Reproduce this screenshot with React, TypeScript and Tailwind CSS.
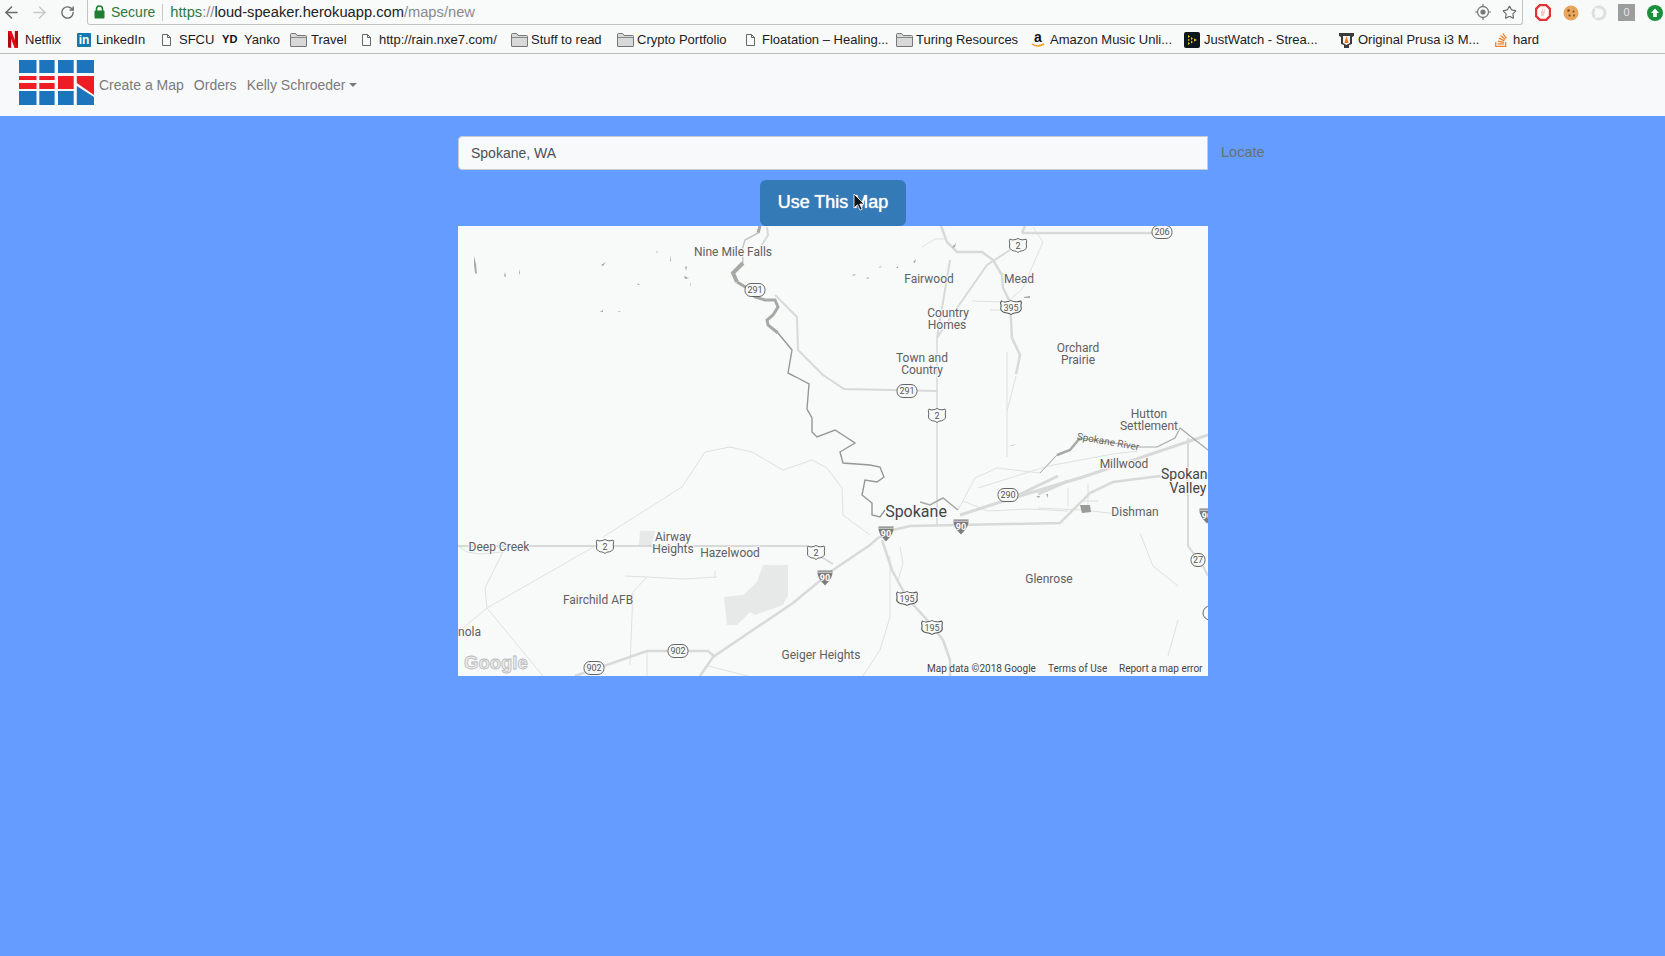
import { ArrowLeft, ArrowRight, RotateCw, Star } from "lucide-react";
import { FaStackOverflow } from "react-icons/fa";
import type { ReactNode } from "react";

const FolderIcon = () => (
  <svg width="17" height="14" viewBox="0 0 17 14" className="shrink-0">
    <path d="M.5 13V1.5A1 1 0 0 1 1.5.5h4.2l1.3 2h8.5a1 1 0 0 1 1 1V13a.5.5 0 0 1-.5.5H1a.5.5 0 0 1-.5-.5z" fill="#d8d8d8" stroke="#777" />
    <path d="M1 4.500h15" stroke="#888" />
  </svg>
);

const DocIcon = () => (
  <svg width="9" height="12" viewBox="0 0 9 12" className="shrink-0">
    <path d="M.5.5h5l3 3v8h-8z M5.500.5v3h3" fill="#fafafa" stroke="#666" />
  </svg>
);

const bookmarks: { label: string; width: string; gap: string; icon: ReactNode }[] = [
  {
    label: "Netflix",
    width: "w-[69px]",
    gap: "gap-[7px]",
    icon: (
      <svg width="10" height="17" viewBox="0 0 10 17" className="shrink-0">
        <path d="M0 0h3.200v17L0 16.600z M6.800 0H10v16.600L6.800 17z" fill="#b1060f" />
        <path d="M0 0h3.400l6.600 17H6.600z" fill="#e50914" />
      </svg>
    ),
  },
  {
    label: "LinkedIn",
    width: "w-[85px]",
    gap: "gap-[5px]",
    icon: (
      <span className="flex h-[14px] w-[14px] shrink-0 items-end justify-center rounded-[1px] bg-[#0f78b4] text-[12px] leading-[13px] font-bold text-white">
        in
      </span>
    ),
  },
  { label: "SFCU", width: "w-[60px]", gap: "gap-[8px]", icon: <DocIcon /> },
  {
    label: "Yanko",
    width: "w-[68px]",
    gap: "gap-[5px]",
    icon: <span className="w-[17px] shrink-0 text-[11px] leading-none font-bold tracking-[0.2px] text-[#111]">YD</span>,
  },
  { label: "Travel", width: "w-[72px]", gap: "gap-[4px]", icon: <FolderIcon /> },
  { label: "http://rain.nxe7.com/", width: "w-[149px]", gap: "gap-[8px]", icon: <DocIcon /> },
  { label: "Stuff to read", width: "w-[106px]", gap: "gap-[3px]", icon: <FolderIcon /> },
  { label: "Crypto Portfolio", width: "w-[129px]", gap: "gap-[3px]", icon: <FolderIcon /> },
  { label: "Floatation – Healing...", width: "w-[150px]", gap: "gap-[7px]", icon: <DocIcon /> },
  { label: "Turing Resources", width: "w-[135px]", gap: "gap-[3px]", icon: <FolderIcon /> },
  {
    label: "Amazon Music Unli...",
    width: "w-[153px]",
    gap: "gap-[5px]",
    icon: (
      <span className="flex h-[17px] w-[14px] shrink-0 flex-col items-center">
        <span className="h-[12px] text-[14px] leading-[12px] font-bold text-[#111]">a</span>
        <svg width="14" height="5" viewBox="0 0 14 5">
          <path d="M1 1c3 2.500 8 2.500 12 0" fill="none" stroke="#f59a23" strokeWidth="1.500" />
        </svg>
      </span>
    ),
  },
  {
    label: "JustWatch - Strea...",
    width: "w-[155px]",
    gap: "gap-[4px]",
    icon: (
      <svg width="16" height="16" viewBox="0 0 16 16" className="shrink-0">
        <rect width="16" height="16" rx="2" fill="#10161d" />
        <path d="M4 3l2 1.500-2 1.500z M4 7l2 1-2 1z M4 10l2 1.500-2 1.500z M7 5l2 1.500-2 1.500z M7 8.500l2 1.500-2 1.500z M10 6.500l3 1.500-3 1.500z" fill="#f5c518" />
      </svg>
    ),
  },
  {
    label: "Original Prusa i3 M...",
    width: "w-[155px]",
    gap: "gap-[4px]",
    icon: (
      <svg width="15" height="16" viewBox="0 0 15 16" className="shrink-0">
        <path d="M0 1h15v3l-2 1v7l-3 1v3H5v-3l-3-1V5L0 4z" fill="#3a3a3a" />
        <path d="M4 4h7v7l-3.500 2L4 11z" fill="#f2f2f2" />
        <path d="M7.500 4l2 7h-4z" fill="#e8751a" />
      </svg>
    ),
  },
  {
    label: "hard",
    width: "w-[60px]",
    gap: "gap-[5px]",
    icon: <FaStackOverflow className="h-[16px] w-[14px] shrink-0 text-[#f48024]" />,
  },
];

function BrowserChrome() {
  return (
    <div className="flex h-[54px] flex-col border-b border-[#bdbdbd] bg-[#f8f9f9] font-['Liberation_Sans',sans-serif]">
      <div className="flex h-[25px] shrink-0 items-start">
        <div className="flex h-[24px] w-[87px] shrink-0 items-center pl-[2px] text-[#666]">
          <ArrowLeft size={19} strokeWidth={2} className="text-[#6b6b6b]" />
          <ArrowRight size={19} strokeWidth={2} className="ml-[9px] text-[#c9c9c9]" />
          <RotateCw size={15} strokeWidth={2.2} className="ml-[11px] text-[#6b6b6b]" />
        </div>
        <div className="flex h-[25px] w-[1436px] shrink-0 items-center rounded-b-[3px] border-x border-b border-[#c2c2c2] bg-[#f9fafa] pl-[6px] text-[14.7px]">
          <svg width="11" height="14" viewBox="0 0 11 14" className="mb-[1px] shrink-0">
            <path d="M2.500 6V4a3 3 0 0 1 6 0v2" fill="none" stroke="#1e7e34" strokeWidth="1.600" />
            <rect x="0.500" y="5.500" width="10" height="8" rx="1" fill="#1e7e34" />
          </svg>
          <span className="ml-[6px] text-[14px] text-[#2b7a3a]">Secure</span>
          <span className="mx-[7px] h-[17px] w-px bg-[#c8c8c8]" />
          <span className="text-[#2b7a3a]">https</span>
          <span className="text-[#8a8a8a]">://</span>
          <span className="text-[#222]">loud-speaker.herokuapp.com</span>
          <span className="text-[#8a8a8a]">/maps/new</span>
          <div className="ml-auto flex items-center gap-[11px] pr-[5px] text-[#666]">
            <svg width="16" height="16" viewBox="0 0 16 16">
              <circle cx="8" cy="8" r="5.500" fill="none" stroke="#777" strokeWidth="1.300" />
              <circle cx="8" cy="8" r="2.600" fill="#777" />
              <path d="M8 0v2.500M8 13.500V16M0 8h2.500M13.500 8H16" stroke="#777" strokeWidth="1.200" />
            </svg>
            <Star size={15} strokeWidth={1.8} />
          </div>
        </div>
        <div className="flex h-[25px] flex-1 items-center pl-[12px]">
          <svg width="16" height="17" viewBox="0 0 16 17" className="shrink-0">
            <path d="M5 1h6l4 4v7l-4 4H5l-4-4V5z" fill="#fff" stroke="#e53232" strokeWidth="2.400" />
            <path d="M6 12V7h1V4.500h1V7h1V5h1v3.500L8.500 12z" fill="#f6c9c9" />
          </svg>
          <svg width="16" height="16" viewBox="0 0 16 16" className="ml-[12px] shrink-0">
            <circle cx="8" cy="8" r="7.500" fill="#e7a65c" />
            <circle cx="5.500" cy="5.500" r="1.200" fill="#7a4a20" />
            <circle cx="10.500" cy="6.500" r="1" fill="#7a4a20" />
            <circle cx="6.500" cy="10.500" r="1.100" fill="#7a4a20" />
            <circle cx="11" cy="10.500" r="0.900" fill="#7a4a20" />
          </svg>
          <svg width="16" height="16" viewBox="0 0 16 16" className="ml-[12px] shrink-0">
            <circle cx="8" cy="8" r="6" fill="none" stroke="#dedede" strokeWidth="3" />
            <path d="M4 3l6 5-6 5" fill="none" stroke="#f8f9f9" strokeWidth="2" />
          </svg>
          <span className="ml-[11px] flex h-[17px] w-[17px] shrink-0 items-center justify-center bg-[#9d9d9d] text-[11px] leading-none text-[#e6e6e6]">
            0
          </span>
          <svg width="16" height="16" viewBox="0 0 16 16" className="ml-[12px] shrink-0">
            <circle cx="8" cy="8" r="8" fill="#1c8f3c" />
            <path d="M8 3.500L12 8H9.800v4H6.200V8H4z" fill="#fff" />
          </svg>
        </div>
      </div>
      <div className="flex h-[28px] items-center pt-[1px] pl-[8px] text-[13px] text-[#1c1c1c]">
        {bookmarks.map((b) => (
          <div key={b.label} className={`flex shrink-0 items-center ${b.width} ${b.gap}`}>
            {b.icon}
            <span className="whitespace-nowrap">{b.label}</span>
          </div>
        ))}
      </div>
    </div>
  );
}

const Logo = () => (
  <svg width="75" height="45" viewBox="0 0 75 45" className="mb-[6px] shrink-0">
    <g fill="#1c75bc">
      <rect x="0" y="0" width="17.500" height="13" />
      <rect x="20.300" y="0" width="15.300" height="13" />
      <rect x="39" y="0" width="15.700" height="13" />
      <rect x="57.800" y="0" width="17.200" height="13" />
      <rect x="0" y="31" width="17.500" height="14" />
      <rect x="20.300" y="31" width="15.300" height="14" />
      <rect x="39" y="31" width="15.700" height="14" />
      <path d="M57.800 26L75 37v8H57.800z" />
    </g>
    <g fill="#ee1c25">
      <rect x="0" y="16" width="17.500" height="4" />
      <rect x="0" y="23" width="17.500" height="6" />
      <rect x="20.300" y="16" width="15.300" height="4" />
      <rect x="20.300" y="23" width="15.300" height="6" />
      <rect x="39" y="16" width="15.700" height="13" />
      <path d="M57.800 16H75v19L57.800 23z" />
    </g>
  </svg>
);

function Navbar() {
  return (
    <nav className="flex h-[62px] items-center bg-[#f8f9fa] pl-[19px] font-['Liberation_Sans',sans-serif] text-[14px] text-[#7a7b7c]">
      <Logo />
      <a className="ml-[5px]">Create a Map</a>
      <a className="ml-[10px]">Orders</a>
      <a className="ml-[10px]">Kelly Schroeder</a>
      <span className="mt-[-1px] ml-[4px] h-0 w-0 border-x-[4px] border-t-[4px] border-x-transparent border-t-[#7a7b7c]" />
    </nav>
  );
}

const USShield = ({ x, y, n }: { x: number; y: number; n: string }) => (
  <g transform={`translate(${x} ${y})`}>
    <path
      transform={n.length > 1 ? "scale(1.2 1)" : undefined}
      d="M-8 -7q2 1.500 4 .8q2.500 -.3 4 -1.300q1.500 1 4 1.300q2 .2 4 -.8q1 1.500 .5 3q-.5 2 0 4q.5 2.500 -2 4q-2 1 -3.500 1q-1.500 .2 -3 1.500q-1.500 -1.300 -3 -1.500q-1.500 0 -3.500 -1q-2.500 -1.500 -2 -4q.5 -2 0 -4q-.5 -1.500 .5 -3z"
      fill="#f8f9f9"
      stroke="#555"
      strokeWidth="0.900"
    />
    <text y="3" textAnchor="middle" fontSize="9" fill="#555">{n}</text>
  </g>
);

const StateOval = ({ x, y, n }: { x: number; y: number; n: string }) => (
  <g transform={`translate(${x} ${y})`}>
    <rect x={n.length > 2 ? -10 : -7} y="-6.500" width={n.length > 2 ? 20 : 14} height="13" rx="6" fill="#f8f9f9" stroke="#555" strokeWidth="0.900" />
    <text y="3" textAnchor="middle" fontSize="9" fill="#555">{n}</text>
  </g>
);

const Interstate = ({ x, y }: { x: number; y: number }) => (
  <g transform={`translate(${x} ${y})`}>
    <path d="M-7.500 -7.500h15v.8q1 6-7.500 14.200q-8.500-8.200-7.500-14.200z" fill="#7c7c7c" />
    <path d="M-7.500 -5.800h15" stroke="#f8f9f9" strokeWidth="0.800" />
    <text y="3" textAnchor="middle" fontSize="9" fontWeight="700" fill="#fff">90</text>
  </g>
);

const labels: [string, number, number][] = [
  ["Nine Mile Falls", 275, 30],
  ["Fairwood", 471, 57],
  ["Mead", 561, 57],
  ["Country", 490, 91],
  ["Homes", 489, 103],
  ["Town and", 464, 136],
  ["Country", 464, 148],
  ["Orchard", 620, 126],
  ["Prairie", 620, 138],
  ["Hutton", 691, 192],
  ["Settlement", 691, 204],
  ["Millwood", 666, 242],
  ["Dishman", 677, 290],
  ["Glenrose", 591, 357],
  ["Deep Creek", 41, 325],
  ["Airway", 215, 315],
  ["Heights", 215, 327],
  ["Hazelwood", 272, 331],
  ["Fairchild AFB", 140, 378],
  ["Geiger Heights", 363, 433],
];

const specks = [
  "M16 30l2 8 1 10-2-1-1-8z",
  "M143 39l5-3-3 4z",
  "M198 26l2-1-1 2z",
  "M212 29l1 6-1 1z",
  "M227 41l2-1-1 5z",
  "M226 50l5 2-4 1z",
  "M232 56l1 4-1-1z",
  "M179 57l3 2-2 0z",
  "M142 86l3-2 0 2z",
  "M160 85l3 0-2 1z",
  "M47 46l1 5-2-1z",
  "M62 43l0 6-1-2z",
  "M566 71l6-1 0 2-6 0z",
  "M495 20l3 -3-1 4-3 1z",
  "M552 220l6-2-4 2z",
  "M394 49l4-1-2 2z",
  "M408 52l3-1-1 2z",
  "M421 41l3-1-2 2z",
  "M438 42l2-2 0 2z",
  "M455 36l3-3-1 4z",
  "M578 270l4 0-1 2z",
  "M588 268l2 0 0 4z",
];

function MapView() {
  return (
    <svg viewBox="0 0 750 450" width="750" height="450" className="block bg-[#f8f9f9] font-['Roboto',sans-serif]">
      <g fill="#e7e8e8">
        <path d="M305 339h25v30l-5 10-28 10-5-3-13 13h-10l-3-28 19-2 14-13z" />
        <path d="M182 305h15l-3 14h-13z" />
      </g>
      {/* thin local roads */}
      <g fill="none" stroke="#dfe0e0" strokeWidth="1">
        <path d="M145 311L224 261 247 226 272 221 294 226 325 244 354 234 369 242 384 262 385 289 412 309" />
        <path d="M0 320L9 326 22 328 45 326 27 362 29 382 85 450" />
        <path d="M139 319L29 382 0 406" />
        <path d="M167 350L189 351 225 353 259 351M175 366L189 351M175 366L172 439M257 351v-6" />
        <path d="M575 1L585 16 565 62 552 74M514 75L544 76M532 84H546" />
        <path d="M549 126V231M558 150L549 185M464 21L477 13H489" />
        <path d="M442 321L445 337 440 355M432 391L422 424 405 450M432 330L432 391" />
        <path d="M682 307L695 340 720 360M720 394L710 430" />
        <path d="M500 284L517 252 539 242 582 247 599 229M520 262L590 240 655 228 680 225" />
        <path d="M189 425V450M250 440L290 450" />
        <path d="M505 275L530 285 570 283 610 285M580 282L625 284 660 288M610 262V280M630 258V285M625 275H640" />
      </g>
      {/* main roads */}
      <g fill="none" stroke="#d8d9d9" strokeWidth="2">
        <path d="M309 1L310 9 304 19M317 69L339 91 340 124 365 149 386 163 479 165" />
        <path d="M564 7L694 7M564 7L567 0" strokeWidth="2.500" />
        <path d="M483 0L489 16 499 26 524 26 535 34 544 49 545 62 552 76 554 112 562 129 560 139 558 148" strokeWidth="2.500" />
        <path d="M552 24L529 39 499 82 479 112 492 34" />
        <path d="M479 112V299" strokeWidth="1.500" />
        <path d="M0 320H349L365 332 375 338" />
        <path d="M242 450L255 431 335 377 375 344 412 319 420 312 435 304 452 300 602 297 612 287 632 267 655 256 702 250 750 252" strokeWidth="2.500" />
        <path d="M502 289L555 272 625 251 750 209" strokeWidth="3" />
        <path d="M730 212V320L745 340 750 350" />
        <path d="M424 314L434 344 449 372 472 397 485 414 492 434 492 450" strokeWidth="2.500" />
        <path d="M117 450L189 425 250 425 257 431" strokeWidth="2.500" />
        <path d="M555 272L575 262 600 250M580 268L610 255" strokeWidth="3" />
      </g>
      {/* Spokane river */}
      <g fill="none" stroke="#a8a9a7">
        <path d="M302 0L300 7" strokeWidth="3" />
        <path d="M300 7L287 14 284 24 285 37" strokeWidth="1.500" stroke="#c4c5c4" />
        <path d="M285 37L275 47 279 56" strokeWidth="4" />
        <path d="M279 56L289 62 297 71 307 74 317 74 320 81 315 89 309 94 310 99 320 107" strokeWidth="3" />
        <path d="M320 107L334 124 330 147 338 151 351 158 349 183 354 192 354 206 359 211 377 204 397 217 382 226 385 237 412 239 422 241 426 251 419 256 407 254 404 269 414 277 414 289 422 291 427 284" strokeWidth="1.400" stroke="#969796" />
        <path d="M462 276L472 279 485 272 500 284" strokeWidth="1.500" />
        <path d="M582 247L599 229" strokeWidth="1" />
        <path d="M599 229L612 224 622 212" strokeWidth="2.500" />
        <path d="M622 212L650 216 679 221 699 221 717 212 722 202 750 224" strokeWidth="1.200" />
      </g>
      {specks.map((d) => (
        <path key={d} d={d} fill="#a8a9a7" />
      ))}
      <path d="M622 279h10l1 7-9 1z" fill="#9a9b99" />

      <g fill="#5f6061" fontSize="12" textAnchor="middle" stroke="#f8f9f9" strokeWidth="2" paintOrder="stroke">
        {labels.map(([t, x, y]) => (
          <text key={t + y} x={x} y={y}>{t}</text>
        ))}
        <text x="0" y="410" textAnchor="start">nola</text>
        <text x="458" y="291" fontSize="16" fill="#444">Spokane</text>
        <text x="730" y="253" fontSize="14" fill="#444">Spokane</text>
        <text x="730" y="267" fontSize="14" fill="#444">Valley</text>
      </g>
      <text x="650" y="219" fontSize="10" fill="#666" textAnchor="middle" transform="rotate(10 650 216)">Spokane River</text>

      <USShield x={560} y={20} n="2" />
      <USShield x={479} y={190} n="2" />
      <USShield x={147} y={321} n="2" />
      <USShield x={358} y={327} n="2" />
      <USShield x={553} y={82} n="395" />
      <USShield x={449} y={373} n="195" />
      <USShield x={474} y={402} n="195" />
      <StateOval x={297} y={64} n="291" />
      <StateOval x={449} y={165} n="291" />
      <StateOval x={704} y={6} n="206" />
      <StateOval x={550} y={269} n="290" />
      <StateOval x={220} y={425} n="902" />
      <StateOval x={136} y={442} n="902" />
      <StateOval x={740} y={334} n="27" />
      <circle cx="752" cy="387" r="7" fill="#f8f9f9" stroke="#555" strokeWidth="0.900" />
      <Interstate x={367} y={352} />
      <Interstate x={428} y={308} />
      <Interstate x={503} y={301} />
      <Interstate x={749} y={290} />

      <text x="6" y="443" fontFamily="'Liberation Sans', sans-serif" fontSize="18.500" fontWeight="700" fill="#eceded" stroke="#b9baba" strokeWidth="0.800">Google</text>
      <g fontSize="10" fill="#444">
        <text x="469" y="446">Map data ©2018 Google</text>
        <text x="590" y="446">Terms of Use</text>
        <text x="661" y="446">Report a map error</text>
      </g>
    </svg>
  );
}

export default function App() {
  return (
    <div className="flex h-[956px] w-full flex-col overflow-hidden bg-[#649cff]">
      <BrowserChrome />
      <Navbar />
      <main className="grid grid-cols-[458px_750px_1fr] pt-[20px] font-['Liberation_Sans',sans-serif]">
        <div className="col-start-2 flex h-[34px] items-center rounded-l-[4px] border border-[#c8ccd0] bg-[#f8f9fa] pl-[12px] text-[14px] text-[#495057]">
          Spokane, WA
        </div>
        <div className="flex h-[34px] items-center pl-[13px] text-[14.5px] text-[#6b6f74]">Locate</div>
        <div className="relative col-start-2 mt-[10px] flex justify-center">
          <button className="h-[46px] w-[146px] rounded-[6px] bg-[#337ab7] pb-[1px] text-[18px] text-white [text-shadow:0_0_1px_white]">
            Use This Map
          </button>
          <svg width="12" height="18" viewBox="0 0 12 18" className="absolute top-[13px] left-[395px]">
            <path d="M1 1v14l3.500-3.300 2.500 5.500 2.200-1-2.500-5.200H11z" fill="#111" stroke="#fff" strokeWidth="0.800" />
          </svg>
        </div>
        <div className="col-start-2">
          <MapView />
        </div>
      </main>
    </div>
  );
}
